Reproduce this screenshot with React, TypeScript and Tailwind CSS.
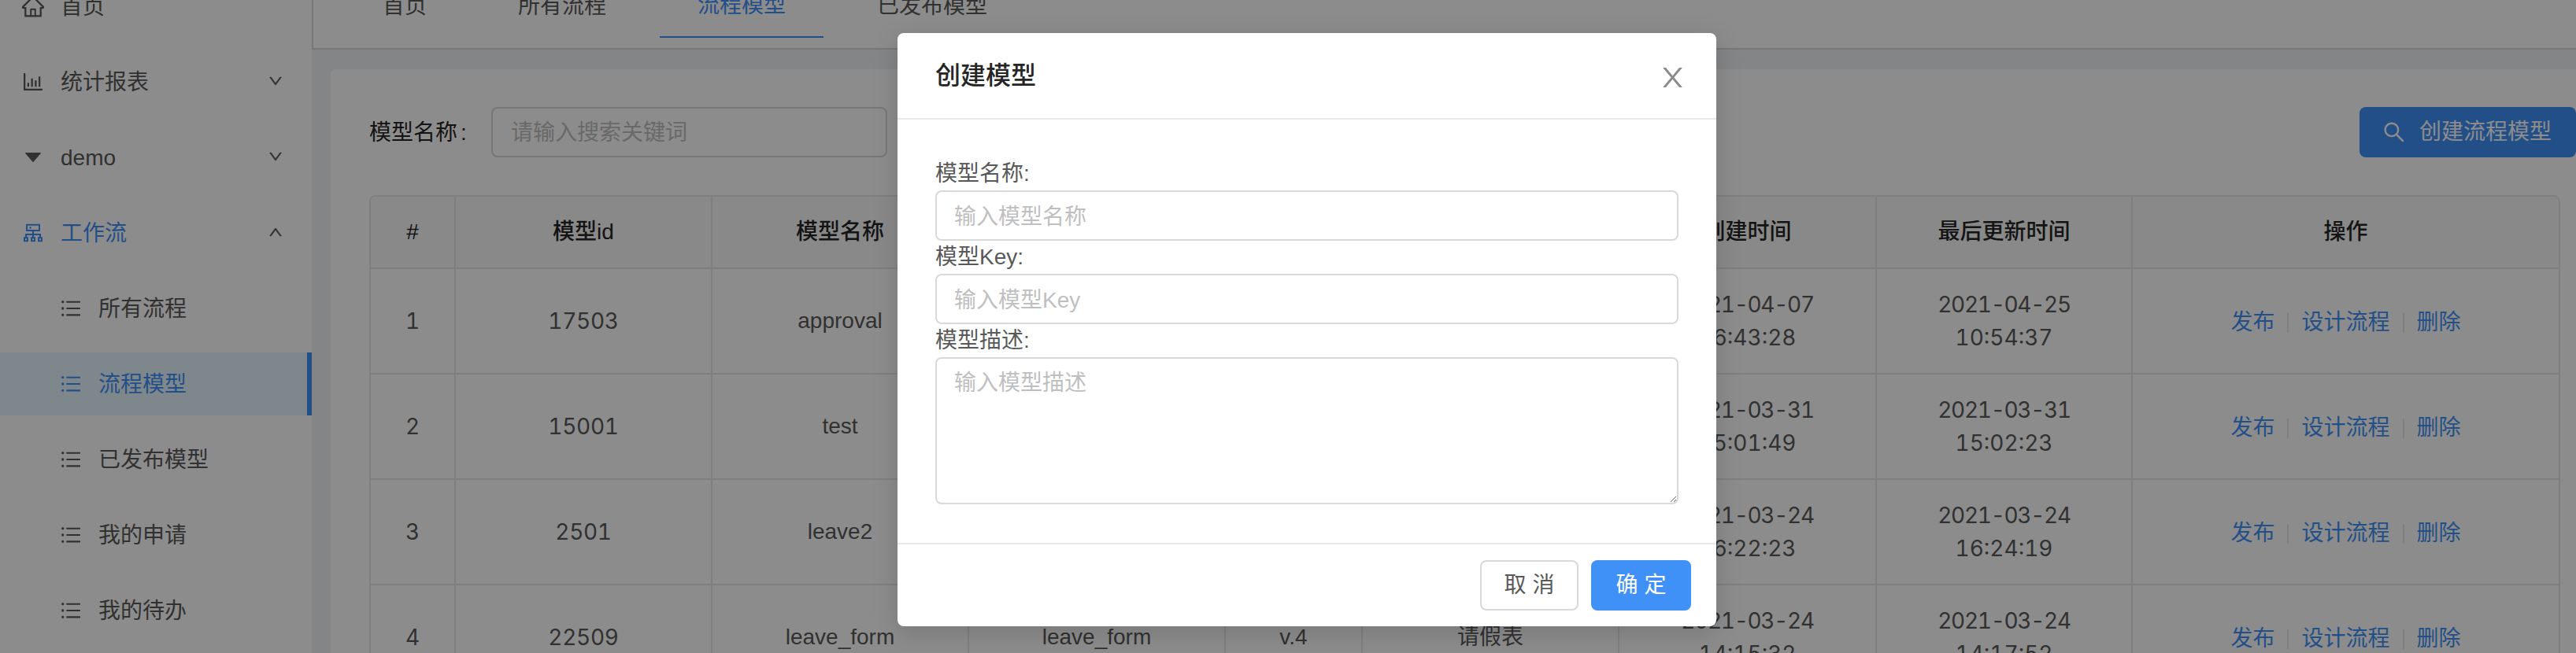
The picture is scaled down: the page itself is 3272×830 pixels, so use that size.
const paths = {
  home: 'M946.5 505L560.1 118.8l-25.9-25.9a31.5 31.5 0 0 0-44.4 0L77.5 505a63.9 63.9 0 0 0-18.8 46c.4 35.2 29.7 63.3 64.9 63.3h42.5V940h691.8V614.3h43.4c17.1 0 33.2-6.7 45.3-18.8a63.6 63.6 0 0 0 18.7-45.3c0-17-6.7-33.1-18.8-45.2zM568 868H456V664h112v204zm217.9-325.7V868H632V640c0-22.1-17.9-40-40-40H432c-22.1 0-40 17.9-40 40v228H238.1V542.3h-96l370-369.7 23.1 23.1L882 542.3h-96.1z',
  chart: 'M888 792H200V168c0-4.4-3.6-8-8-8h-56c-4.4 0-8 3.6-8 8v688c0 4.4 3.6 8 8 8h752c4.4 0 8-3.6 8-8v-56c0-4.4-3.6-8-8-8zm-600-80h56c4.4 0 8-3.6 8-8V560c0-4.4-3.6-8-8-8h-56c-4.4 0-8 3.6-8 8v144c0 4.4 3.6 8 8 8zm152 0h56c4.4 0 8-3.6 8-8V384c0-4.4-3.6-8-8-8h-56c-4.4 0-8 3.6-8 8v320c0 4.4 3.6 8 8 8zm152 0h56c4.4 0 8-3.6 8-8V462c0-4.4-3.6-8-8-8h-56c-4.4 0-8 3.6-8 8v242c0 4.4 3.6 8 8 8zm152 0h56c4.4 0 8-3.6 8-8V304c0-4.4-3.6-8-8-8h-56c-4.4 0-8 3.6-8 8v400c0 4.4 3.6 8 8 8z',
  caret: 'M840.4 300H183.6c-19.7 0-30.7 20.8-18.5 35l328.4 380.8c9.4 10.9 27.5 10.9 37 0L858.9 335c12.2-14.2 1.2-35-18.5-35z',
  cluster: 'M888 680h-54V540H546v-92h238c8.8 0 16-7.2 16-16V168c0-8.8-7.2-16-16-16H240c-8.8 0-16 7.2-16 16v264c0 8.8 7.2 16 16 16h238v92H190v140h-54c-4.4 0-8 3.6-8 8v176c0 4.4 3.6 8 8 8h176c4.4 0 8-3.6 8-8V688c0-4.4-3.6-8-8-8h-54v-72h220v72h-54c-4.4 0-8 3.6-8 8v176c0 4.4 3.6 8 8 8h176c4.4 0 8-3.6 8-8V688c0-4.4-3.6-8-8-8h-54v-72h220v72h-54c-4.4 0-8 3.6-8 8v176c0 4.4 3.6 8 8 8h176c4.4 0 8-3.6 8-8V688c0-4.4-3.6-8-8-8zM256 805.3c0 1.5-1.2 2.7-2.7 2.7h-58.7c-1.5 0-2.7-1.2-2.7-2.7v-58.7c0-1.5 1.2-2.7 2.7-2.7h58.7c1.5 0 2.7 1.2 2.7 2.7v58.7zm288 0c0 1.5-1.2 2.7-2.7 2.7h-58.7c-1.5 0-2.7-1.2-2.7-2.7v-58.7c0-1.5 1.2-2.7 2.7-2.7h58.7c1.5 0 2.7 1.2 2.7 2.7v58.7zM288 384V216h448v168H288zm544 421.3c0 1.5-1.2 2.7-2.7 2.7h-58.7c-1.5 0-2.7-1.2-2.7-2.7v-58.7c0-1.5 1.2-2.7 2.7-2.7h58.7c1.5 0 2.7 1.2 2.7 2.7v58.7zM360 300a40 40 0 1 0 80 0 40 40 0 1 0-80 0z',
  list: 'M912 192H328c-4.4 0-8 3.6-8 8v56c0 4.4 3.6 8 8 8h584c4.4 0 8-3.6 8-8v-56c0-4.4-3.6-8-8-8zm0 284H328c-4.4 0-8 3.6-8 8v56c0 4.4 3.6 8 8 8h584c4.4 0 8-3.6 8-8v-56c0-4.4-3.6-8-8-8zm0 284H328c-4.4 0-8 3.6-8 8v56c0 4.4 3.6 8 8 8h584c4.4 0 8-3.6 8-8v-56c0-4.4-3.6-8-8-8zM104 228a56 56 0 1 0 112 0 56 56 0 1 0-112 0zm0 284a56 56 0 1 0 112 0 56 56 0 1 0-112 0zm0 284a56 56 0 1 0 112 0 56 56 0 1 0-112 0z',
  down: 'M884 256h-75c-5.1 0-9.9 2.5-12.9 6.6L512 654.2 227.9 262.6c-3-4.1-7.8-6.6-12.9-6.6h-75c-6.5 0-10.3 7.4-6.5 12.7l352.6 486.1c12.8 17.6 39 17.6 51.7 0l352.6-486.1c3.9-5.3.1-12.7-6.4-12.7z',
  search: 'M909.6 854.5L649.9 594.8C690.2 542.7 712 479 712 412c0-80.2-31.3-155.4-87.9-212.1-56.6-56.7-132-87.9-212.1-87.9s-155.5 31.3-212.1 87.9C143.2 256.5 112 331.8 112 412c0 80.1 31.3 155.5 87.9 212.1C256.5 680.8 331.8 712 412 712c67 0 130.6-21.8 182.7-62l259.7 259.6a8.2 8.2 0 0 0 11.6 0l43.6-43.5a8.2 8.2 0 0 0 0-11.6zM570.4 570.4C528 612.7 471.8 636 412 636s-116-23.3-158.4-65.6C211.3 528 188 471.8 188 412s23.3-116.1 65.6-158.4C296 211.3 352.2 188 412 188s116.1 23.2 158.4 65.6S636 352.2 636 412s-23.3 116.1-65.6 158.4z',
  close: 'M563.8 512l262.5-312.9c4.4-5.2.7-13.1-6.1-13.1h-79.8c-4.7 0-9.2 2.1-12.3 5.7L511.6 449.8 295.1 191.7c-3-3.6-7.5-5.7-12.3-5.7H203c-6.8 0-10.5 7.9-6.1 13.1L459.4 512 196.9 824.9A7.95 7.95 0 0 0 203 838h79.8c4.7 0 9.2-2.1 12.3-5.7l216.5-258.1 216.5 258.1c3 3.6 7.5 5.7 12.3 5.7h79.8c6.8 0 10.5-7.9 6.1-13.1L563.8 512z',
}

function Icon({ name, className }: { name: keyof typeof paths; className?: string }) {
  return (
    <svg viewBox="0 0 1024 1024" fill="currentColor" className={className}>
      <path d={paths[name]} />
    </svg>
  )
}

const sideItems = [
  { label: '统计报表', icon: 'chart', arrow: 'down' },
  { label: 'demo', icon: 'caret', arrow: 'down' },
  { label: '工作流', icon: 'cluster', arrow: 'up', open: true },
] as const

const subItems = ['所有流程', '流程模型', '已发布模型', '我的申请', '我的待办']

function Sidebar() {
  return (
    <aside className="w-[396px] shrink-0 bg-white flex flex-col gap-4 text-[#595959]">
      <div className="h-20 flex items-center pl-[26px] gap-[19px]">
        <Icon name="home" className="w-8 h-8" />
        <span className="pt-0.5">首页</span>
      </div>
      {sideItems.map((item) => (
        <div
          key={item.label}
          className={`h-20 flex items-center pl-[26px] pr-[36px] gap-[19px] ${'open' in item ? 'text-[#4091f7]' : ''}`}
        >
          <Icon name={item.icon} className={`w-8 h-8 ${item.icon === 'caret' ? 'scale-90' : ''}`} />
          <span className="flex-1 pt-0.5">{item.label}</span>
          <Icon
            name="down"
            className={`w-5 h-5 -mt-0.5 text-[#595959] stroke-current stroke-[30] ${item.arrow === 'up' ? 'rotate-180' : ''}`}
          />
        </div>
      ))}
      {subItems.map((label) => (
        <div
          key={label}
          className={`h-20 flex items-center pl-[75px] gap-5 ${
            label === '流程模型' ? 'bg-[#e6f7ff] text-[#4091f7] border-r-[6px] border-[#4091f7]' : ''
          }`}
        >
          <Icon name="list" className="w-[30px] h-[30px]" />
          <span className="pt-0.5">{label}</span>
        </div>
      ))}
    </aside>
  )
}

function Tabs() {
  const tabs = ['首页', '所有流程', '流程模型', '已发布模型']
  return (
    <div className="h-[95px] bg-white border-l-2 border-b-2 border-[#d9d9d9] pl-10 flex gap-5 items-start">
      {tabs.map((t) => (
        <div
          key={t}
          className={`h-20 px-12 flex items-center ${
            t === '流程模型' ? 'text-[#4091f7] border-b-2 border-[#4091f7]' : 'text-[#595959]'
          }`}
        >
          {t}
        </div>
      ))}
    </div>
  )
}

const numFont = "font-['Inter','Noto_Sans_CJK_SC',sans-serif] tabular-nums"

const rows = [
  ['1', '17503', 'approval', 'approval', 'v.1', '审批流程', '2021-04-07', '16:43:28', '2021-04-25', '10:54:37'],
  ['2', '15001', 'test', 'test', 'v.1', '测试', '2021-03-31', '15:01:49', '2021-03-31', '15:02:23'],
  ['3', '2501', 'leave2', 'leave2', 'v.2', '请假', '2021-03-24', '16:22:23', '2021-03-24', '16:24:19'],
  ['4', '22509', 'leave_form', 'leave_form', 'v.4', '请假表', '2021-03-24', '14:15:32', '2021-03-24', '14:17:52'],
]

const thCls = 'h-[92px] border-r-2 border-b-2 border-[#e8e8e8] bg-[#fafafa] font-medium text-[#262626] text-center'
const tdCls = 'h-[134px] border-r-2 border-b-2 border-[#e8e8e8] text-center text-[#595959]'

function DateCell({ date, time }: { date: string; time: string }) {
  return (
    <td className={`${tdCls} ${numFont}`}>
      <span className="tracking-[-1.3px]">{date}</span>
      <br />
      {time}
    </td>
  )
}

function ModelTable() {
  const heads = ['#', '模型id', '模型名称', '模型Key', '版本', '模型描述', '创建时间', '最后更新时间', '操作']
  const widths = ['w-[108px]', 'w-[326px]', 'w-[326px]', 'w-[326px]', 'w-[174px]', 'w-[326px]', 'w-[327px]', 'w-[325px]', 'w-[543px]']
  return (
    <table className="w-[2783px] table-fixed border-separate border-spacing-0 border-l-2 border-t-2 border-[#e8e8e8] rounded-t-lg">
      <colgroup>
        {widths.map((w, i) => (
          <col key={i} className={w} />
        ))}
      </colgroup>
      <thead>
        <tr>
          {heads.map((h, i) => (
            <th key={h} className={`${thCls} ${i === 0 ? 'rounded-tl-lg' : ''} ${i === 8 ? 'rounded-tr-lg' : ''}`}>
              {h}
            </th>
          ))}
        </tr>
      </thead>
      <tbody>
        {rows.map((r) => (
          <tr key={r[0]}>
            <td className={`${tdCls} ${numFont}`}>{r[0]}</td>
            <td className={`${tdCls} ${numFont} tracking-[-0.3px]`}>{r[1]}</td>
            <td className={tdCls}>{r[2]}</td>
            <td className={tdCls}>{r[3]}</td>
            <td className={tdCls}>{r[4]}</td>
            <td className={tdCls}>{r[5]}</td>
            <DateCell date={r[6]} time={r[7]} />
            <DateCell date={r[8]} time={r[9]} />
            <td className={tdCls}>
              <div className="flex items-center justify-center pt-1 text-[#4091f7]">
                <span>发布</span>
                <span className="w-0.5 h-[25px] bg-[#e8e8e8] mx-4" />
                <span>设计流程</span>
                <span className="w-0.5 h-[25px] bg-[#e8e8e8] mx-4" />
                <span>删除</span>
              </div>
            </td>
          </tr>
        ))}
      </tbody>
    </table>
  )
}

function Main() {
  return (
    <main className="flex-1 min-w-0 bg-[#f0f2f5]">
      <Tabs />
      <section className="ml-6 mt-[25px] bg-white rounded-tl-md pt-12 pl-[49px]">
        <div className="w-[2803px] flex items-center mb-12">
          <label className="w-[155px] pt-0.5 text-[#262626]">
            模型名称<span className="ml-1">:</span>
          </label>
          <input
            placeholder="请输入搜索关键词"
            className="w-[503px] h-16 px-[23px] pt-0.5 bg-white border-2 border-[#d9d9d9] rounded-lg outline-none placeholder:text-[#bfbfbf]"
          />
          <button className="ml-auto w-[275px] h-16 pl-7 flex items-center gap-4 rounded-lg bg-[#4091f7] text-white">
            <Icon name="search" className="w-8 h-8" />
            创建流程模型
          </button>
        </div>
        <ModelTable />
      </section>
    </main>
  )
}

function Field({ label, placeholder }: { label: string; placeholder: string }) {
  return (
    <>
      <label className="block h-[42px] text-[#595959]">{label}</label>
      <input
        placeholder={placeholder}
        className="block w-full h-16 px-[22px] pt-1 border-2 border-[#d9d9d9] rounded-lg outline-none placeholder:text-[#bfbfbf]"
      />
    </>
  )
}

function CreateModal() {
  return (
    <div className="absolute top-[42px] left-[1140px] w-[1040px] bg-white rounded-lg shadow-[0_8px_32px_rgba(0,0,0,0.15)]">
      <div className="h-[110px] px-12 border-b-2 border-[#e8e8e8] flex items-center justify-between">
        <h2 className="text-[32px] font-medium text-[#262626]">创建模型</h2>
        <Icon name="close" className="w-[39px] h-[39px] -mr-3 mt-1 text-[#8c8c8c]" />
      </div>
      <div className="px-12 pt-12 pb-[49px]">
        <Field label="模型名称:" placeholder="输入模型名称" />
        <Field label="模型Key:" placeholder="输入模型Key" />
        <label className="block h-[42px] text-[#595959]">模型描述:</label>
        <textarea
          placeholder="输入模型描述"
          className="block w-full h-[187px] px-[22px] pt-2.5 border-2 border-[#d9d9d9] rounded-lg outline-none placeholder:text-[#bfbfbf]"
        />
      </div>
      <div className="h-[106px] pt-5 pr-8 border-t-2 border-[#e8e8e8] flex justify-end gap-4">
        <button className="w-[125px] h-16 border-2 border-[#d9d9d9] rounded-lg text-[#595959]">取 消</button>
        <button className="w-[127px] h-16 rounded-lg bg-[#4091f7] text-white">确 定</button>
      </div>
    </div>
  )
}

export default function App() {
  return (
    <div className="relative h-[830px] overflow-hidden bg-white text-[28px] leading-[42px] font-['Liberation_Sans','Noto_Sans_CJK_SC',sans-serif]">
      <div className="flex -mt-8">
        <Sidebar />
        <Main />
      </div>
      <div className="absolute inset-0 bg-black/45" />
      <CreateModal />
    </div>
  )
}
